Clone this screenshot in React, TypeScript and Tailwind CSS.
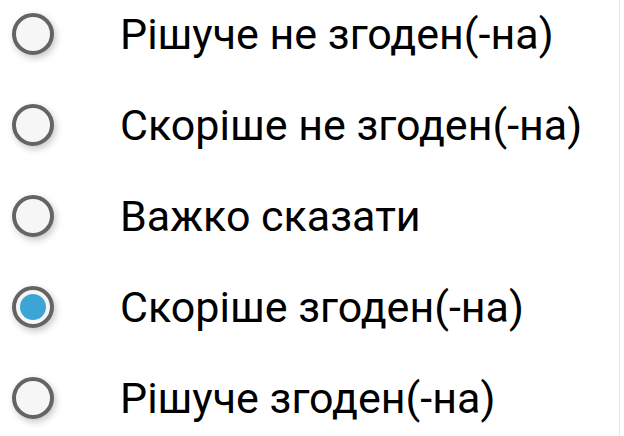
import { useState } from "react";

const options = [
  "Рішуче не згоден(-на)",
  "Скоріше не згоден(-на)",
  "Важко сказати",
  "Скоріше згоден(-на)",
  "Рішуче згоден(-на)",
];

const Radio = ({ checked }: { checked: boolean }) => (
  <span className="flex h-[42px] w-[42px] shrink-0 items-center justify-center rounded-full border-[4px] border-[#646464] bg-[#f6f6f6] shadow-[2px_3px_7px_rgba(0,0,0,0.22)]">
    {checked && <span className="h-[26px] w-[26px] rounded-full bg-[#3ba6d6]" />}
  </span>
);

export default function App() {
  const [selected, setSelected] = useState(3);

  return (
    <div className="h-[436px] w-[624px] overflow-hidden bg-white">
      <div
        className="flex h-full w-[620px] flex-col gap-[49px] border-r border-[#e6e6e6] pl-[12px] pt-[13px]"
        style={{ fontFamily: "Roboto, 'Noto Sans', sans-serif" }}
      >
        {options.map((label, i) => (
          <label
            key={label}
            className="flex h-[42px] cursor-pointer items-center gap-[66px]"
            onClick={() => setSelected(i)}
          >
            <Radio checked={selected === i} />
            <span className="text-[43px] leading-none whitespace-nowrap text-black">
              {label}
            </span>
          </label>
        ))}
      </div>
    </div>
  );
}
